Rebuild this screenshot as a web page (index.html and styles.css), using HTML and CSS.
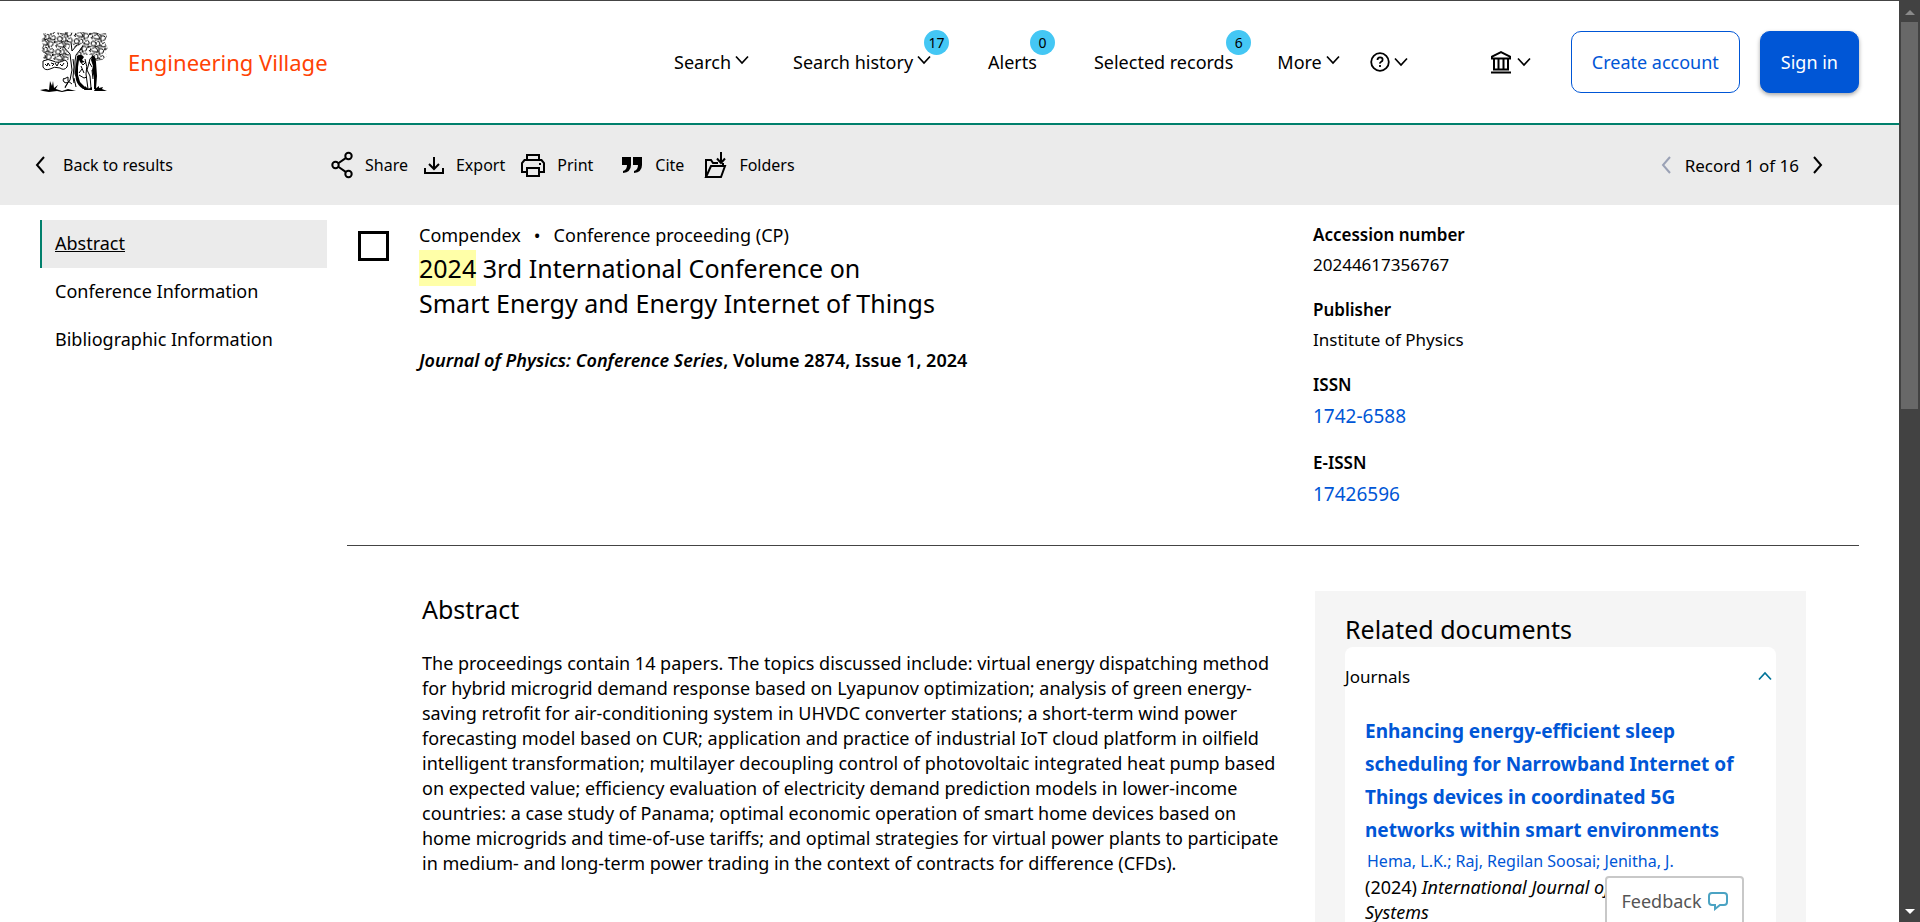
FILE: index.html
```html
<!DOCTYPE html>
<html lang="en">
<head>
    <meta charset="UTF-8">
    <meta name="viewport" content="width=device-width, initial-scale=1.0">
    <title>Engineering Village - Abstract</title>
    <link rel="stylesheet" href="styles.css">
</head>
<body>
    <!-- Shared icons -->
    <svg class="sprite" aria-hidden="true">
        <symbol id="chevron-down" viewBox="0 0 14 10">
            <path d="M1 1.5l6 6.5 6-6.5" fill="none" stroke="currentColor" stroke-width="1.7"/>
        </symbol>
        <symbol id="chevron-left" viewBox="0 0 10 18">
            <path d="M9 1L2 9l7 8" fill="none" stroke="currentColor" stroke-width="2"/>
        </symbol>
        <symbol id="chevron-right" viewBox="0 0 10 18">
            <path d="M1 1l7 8-7 8" fill="none" stroke="currentColor" stroke-width="2"/>
        </symbol>
    </svg>

    <div class="page">
        <header class="header">
            <a href="#" class="brand">
                <svg class="brand-logo" viewBox="0 0 68 60" aria-hidden="true">
                    <defs>
                        <pattern id="leaves" width="17" height="13" patternUnits="userSpaceOnUse" patternTransform="rotate(8)">
                            <g fill="none" stroke="#000" stroke-width="1">
                                <path d="M1 4q1-4 4-2t0 4-4-2M7 1q3 0 3 3t-3 2M12 3q3-3 4 0t-2 3-3-2M3 9q3-3 5 0t-2 3-3-1M10 8l3 0q3 1 1 4t-4 0zM0 11l2 2M15 8l2-1M8 7l2 1M5 0l1 1M10 0l2 1M0 8l2-1M8 12v1"/>
                            </g>
                            <path d="M5 6l3 0-2 2zM10 4l2 1-1 2zM15 6l2 3-2 0zM8 10l2 1-1 2zM1 9l2 1-2 2zM10 1l1-1 1 2zM5 3l2-1-1 2z"/>
                        </pattern>
                    </defs>
                    <path fill="url(#leaves)" d="M3 1l6 1 5-2 7 1 6-1 7 1 8-1 7 1 6-1 5 2 6-1 1 6-2 4 3 5-3 4 2 4-5 4-5 1-5-3-6 1-6-2-5 4-8-1-6 2-7-2-6 1-5-3 2-4-4-4 2-5-2-5 3-3z"/>
                    <path fill="#fff" stroke="#000" stroke-width="1" d="M3 29q5-3 10 0t12-1q4 2 2 7-3 4-7 1-6-2-10 1-5 2-7-2z"/>
                    <path d="M5 32l2 2 1-3 2 3M11 31l3 1-2 2M15 31l2 3 2-4M20 32l2 2 2-3" fill="none" stroke="#000" stroke-width="1"/>
                    <path fill="#fff" d="M29 22l-6-8 6 3 2-8 4 7 9-6-7 13h17l3 14-2 17-21 2-7-3z"/>
                    <g fill="none" stroke="#000">
                        <path d="M23 14l7 8M31 10l1 9 5-6M43 14l-7 9M30 22l1 8 1 8-2 10-5 7M36 23l-1 6v13l4 8 7 7M33 27l1 8-1 10 1 6M28 50l-3 6M34 46l2 9"/>
                        <path d="M24 46q-2 2 0 4t4 0M24 47l4-2 0 4 4 3"/>
                        <path d="M45 27q3 8 1 15l2 15M40 29l3 4 3-3M39 43l5 3 3-1M53 24q-4 2-4 7l-2 7 3 6 1 12M41 34l3 7M49 30l3 5M52 38l1 9M42 37l-3 4"/>
                    </g>
                    <path d="M37 24q4-3 7 1l-2 3 3 2-4 1-2-3-1 7v8l2 7 5 5 4 2h-6q-5-3-7-9l-1-8z"/>
                    <path d="M52 23q4 1 4 7l1 14-1 13-2 0 0-11-2-8 1-4-2-6z"/>
                    <path d="M45 54l3 3 4-2v3h-8z"/>
                    <path d="M9 58l1-9 2 5 1-5 1 7 4-3-3 5zM0 58l6-1 3 1 7-1 6 2 6-2 8 2h-9l-5 1-5-1-8 1-6-1zM55 57l4-3v2l4-1-1 2 5 2H54z"/>
                </svg>
                <span class="brand-name">Engineering Village</span>
            </a>
            <nav class="main-nav">
                <a href="#" class="nav-link">Search<svg class="chevron"><use href="#chevron-down"/></svg></a>
                <a href="#" class="nav-link spaced">Search history<svg class="chevron"><use href="#chevron-down"/></svg><span class="badge">17</span></a>
                <a href="#" class="nav-link spaced">Alerts<span class="badge">0</span></a>
                <a href="#" class="nav-link">Selected records<span class="badge">6</span></a>
                <a href="#" class="nav-link">More<svg class="chevron"><use href="#chevron-down"/></svg></a>
                <button class="icon-button help" aria-label="Help">
                    <svg width="20" height="20" viewBox="0 0 20 20" fill="none" stroke="currentColor" stroke-width="1.8">
                        <circle cx="10" cy="10" r="8.8"/>
                        <path d="M7.5 8q0-2.6 2.6-2.6T12.6 7.7q0 1.3-1.4 2t-1.2 2"/>
                        <path d="M10 13v2"/>
                    </svg>
                    <svg class="chevron"><use href="#chevron-down"/></svg>
                </button>
                <button class="icon-button institution" aria-label="Institution">
                    <svg width="22" height="24" viewBox="0 0 22 24" fill="none" stroke="currentColor" stroke-width="2">
                        <path d="M2 8.500V6.500l9-4.500 9 4.500v2zM3 19.500h16M1 22.500h20M4 9v10M8.500 9v10M13.500 9v10M18 9v10"/>
                    </svg>
                    <svg class="chevron"><use href="#chevron-down"/></svg>
                </button>
            </nav>
            <div class="account">
                <button class="btn btn-outline">Create account</button>
                <button class="btn btn-primary">Sign in</button>
            </div>
        </header>

        <div class="toolbar">
            <a href="#" class="back-link">
                <svg width="10" height="18"><use href="#chevron-left"/></svg>
                Back to results
            </a>
            <div class="tools">
                <button class="tool">
                    <svg width="22" height="28" viewBox="0 0 22 28" fill="none" stroke="currentColor" stroke-width="2">
                        <circle cx="4.500" cy="14" r="3.200"/><circle cx="17.500" cy="5" r="3.200"/><circle cx="17.500" cy="23" r="3.200"/>
                        <path d="M7.300 12.300l7.400-5.200M7.300 15.700l7.400 5.200"/>
                    </svg>
                    Share
                </button>
                <button class="tool">
                    <svg width="20" height="24" viewBox="0 0 20 24" fill="none" stroke="currentColor" stroke-width="2">
                        <path d="M1 15v5h18v-5M10 4v11M5 11l5 5 5-5"/>
                    </svg>
                    Export
                </button>
                <button class="tool">
                    <svg width="24" height="24" viewBox="0 0 24 24" fill="none" stroke="currentColor" stroke-width="2">
                        <path d="M6 7V2h12v5M5 19H1v-9l2.500-3h17L23 10v9h-4M6 15h12v8H6zM18 11h2"/>
                    </svg>
                    Print
                </button>
                <button class="tool tool-cite">
                    <svg width="22" height="24" viewBox="0 0 22 24" fill="currentColor">
                        <path d="M1 4h9v8q0 7-8 8v-2q4-1 4-6H1zM12 4h9v8q0 7-8 8v-2q4-1 4-6h-5z"/>
                    </svg>
                    Cite
                </button>
                <button class="tool">
                    <svg width="23" height="28" viewBox="0 0 23 28" fill="none" stroke="currentColor" stroke-width="2">
                        <path d="M3 26H2V9h5l2 3h5M19 15v-3M2 26l5-11h14l-4 11zM17 1v11M13 7.500l4 4.500 4-4.500"/>
                    </svg>
                    Folders
                </button>
            </div>
            <div class="pager">
                <button class="pager-button" aria-label="Previous record" disabled><svg width="10" height="18"><use href="#chevron-left"/></svg></button>
                <span>Record 1 of 16</span>
                <button class="pager-button" aria-label="Next record"><svg width="10" height="18"><use href="#chevron-right"/></svg></button>
            </div>
        </div>

        <div class="content">
            <nav class="side-nav">
                <a href="#" class="side-link active">Abstract</a>
                <a href="#" class="side-link">Conference Information</a>
                <a href="#" class="side-link">Bibliographic Information</a>
            </nav>

            <main class="record">
                <section class="record-head">
                    <input type="checkbox" class="record-check" aria-label="Select record">
                    <div class="record-info">
                        <p class="source"><span>Compendex</span><span>•</span><span>Conference proceeding (CP)</span></p>
                        <h1><mark>2024</mark> 3rd International Conference on<br>Smart Energy and Energy Internet of Things</h1>
                        <p class="journal"><em>Journal of Physics: Conference Series</em>, Volume 2874, Issue 1, 2024</p>
                    </div>
                    <dl class="details">
                        <dt>Accession number</dt>
                        <dd>20244617356767</dd>
                        <dt>Publisher</dt>
                        <dd>Institute of Physics</dd>
                        <dt>ISSN</dt>
                        <dd><a href="#">1742-6588</a></dd>
                        <dt>E-ISSN</dt>
                        <dd><a href="#">17426596</a></dd>
                    </dl>
                </section>

                <section class="record-body">
                    <article class="abstract">
                        <h2>Abstract</h2>
                        <p>The proceedings contain 14 papers. The topics discussed include: virtual energy dispatching method for hybrid microgrid demand response based on Lyapunov optimization; analysis of green energy-saving retrofit for air-conditioning system in UHVDC converter stations; a short-term wind power forecasting model based on CUR; application and practice of industrial IoT cloud platform in oilfield intelligent transformation; multilayer decoupling control of photovoltaic integrated heat pump based on expected value; efficiency evaluation of electricity demand prediction models in lower-income countries: a case study of Panama; optimal economic operation of smart home devices based on home microgrids and time-of-use tariffs; and optimal strategies for virtual power plants to participate in medium- and long-term power trading in the context of contracts for difference (CFDs).</p>
                    </article>

                    <aside class="related">
                        <h2>Related documents</h2>
                        <div class="related-card">
                            <button class="related-toggle">Journals<svg class="chevron"><use href="#chevron-down"/></svg></button>
                            <div class="related-item">
                                <a href="#" class="related-title">Enhancing energy-efficient sleep scheduling for Narrowband Internet of Things devices in coordinated 5G networks within smart environments</a>
                                <p class="authors"><a href="#">Hema, L.K.;</a> <a href="#">Raj, Regilan Soosai;</a> <a href="#">Jenitha, J.</a></p>
                                <p class="published">(2024) <em>International Journal of Communication Systems</em></p>
                            </div>
                        </div>
                    </aside>
                </section>
            </main>
        </div>
    </div>

    <div class="scrollbar" aria-hidden="true">
        <span class="arrow arrow-up"></span>
        <span class="thumb"></span>
        <span class="arrow arrow-down"></span>
    </div>

    <button class="feedback">
        Feedback
        <svg width="20" height="20" viewBox="0 0 20 20" fill="none" stroke="#4ba3c3" stroke-width="2">
            <path d="M4 2h12q3 0 3 3v6q0 3-3 3h-4l-5 4v-4H4q-3 0-3-3V5q0-3 3-3z"/>
        </svg>
    </button>
</body>
</html>
```
FILE: styles.css
```css
* {
    margin: 0;
    padding: 0;
    box-sizing: border-box;
}

body {
    display: flex;
    height: 100vh;
    overflow: hidden;
    background: #fff;
    color: #000;
    font-family: 'Noto Sans', 'Open Sans', sans-serif;
    font-size: 18px;
}

a {
    color: inherit;
    text-decoration: none;
}

button {
    background: none;
    border: none;
    color: inherit;
    font: inherit;
    cursor: pointer;
}

svg {
    flex-shrink: 0;
}

.sprite {
    position: absolute;
    width: 0;
    height: 0;
}

.page {
    flex: 1;
    min-width: 0;
    height: 100vh;
    overflow: hidden;
    border-top: 1px solid #444;
}

.chevron {
    width: 14px;
    height: 10px;
}

/* Header */
.header {
    display: flex;
    align-items: center;
    height: 124px;
    padding: 0 40px;
    border-bottom: 2px solid #00806c;
}

.brand {
    display: flex;
    align-items: center;
    gap: 20px;
    color: #ff4203;
    font-size: 22px;
}

.brand-logo {
    width: 68px;
    height: 60px;
}

.main-nav {
    display: flex;
    align-items: center;
    gap: 44px;
    margin-left: auto;
}

.nav-link {
    position: relative;
    white-space: nowrap;
}

.nav-link.spaced {
    margin-right: 13px;
}

.nav-link .chevron {
    margin: 0 0 4px 4px;
}

.badge {
    position: absolute;
    top: -20px;
    right: -18px;
    width: 25px;
    height: 25px;
    border-radius: 50%;
    background: #44c7f4;
    font-size: 14px;
    line-height: 25px;
    text-align: center;
}

.icon-button {
    display: flex;
    align-items: center;
    gap: 4px;
}

.help {
    margin: 0 38px 0 -14px;
}

.institution {
    gap: 5px;
}

.account {
    display: flex;
    gap: 20px;
    margin-left: 40px;
}

.btn {
    height: 62px;
    padding: 0 20px;
    border: 1px solid #0056d6;
    border-radius: 10px;
}

.btn-outline {
    color: #0056d6;
}

.btn-primary {
    background: #0056d6;
    color: #fff;
    box-shadow: 0 2px 4px rgba(0, 0, 0, 0.35);
}

/* Record toolbar */
.toolbar {
    display: flex;
    align-items: center;
    height: 80px;
    padding: 0 76px 0 35px;
    background: #ebebeb;
    font-size: 16px;
}

.back-link {
    display: flex;
    align-items: center;
    gap: 18px;
    width: 296px;
}

.tools {
    display: flex;
    gap: 16px;
}

.tool {
    display: flex;
    align-items: center;
    gap: 12px;
}

.tool-cite {
    margin: 0 4px 0 12px;
}

.pager {
    display: flex;
    align-items: center;
    gap: 14px;
    margin-left: auto;
    font-size: 17px;
}

.pager-button {
    display: flex;
}

.pager-button:disabled {
    color: #9aa1b5;
}

/* Content */
.content {
    display: flex;
    gap: 20px;
    padding: 15px 40px 0;
}

.side-nav {
    flex: 0 0 287px;
}

.side-link {
    display: block;
    height: 48px;
    padding-left: 13px;
    border-left: 2px solid transparent;
    line-height: 46px;
}

.side-link.active {
    border-color: #00806c;
    background: #ebebeb;
    text-decoration: underline;
}

.record {
    flex: 1;
    min-width: 0;
}

.record-head {
    display: flex;
    padding: 0 0 34px 11px;
    border-bottom: 1px solid #444;
}

.record-check {
    appearance: none;
    width: 31px;
    height: 30px;
    margin: 11px 30px 0 0;
    border: 3px solid #000;
    background: #fff;
}

.record-info {
    flex: 1;
}

.source {
    display: flex;
    gap: 13px;
    line-height: 30px;
}

h1 {
    padding-top: 1px;
    font-size: 25px;
    font-weight: 400;
    line-height: 35px;
}

mark {
    padding: 1px 0;
    background: #ffffa8;
}

.journal {
    margin-top: 24px;
    font-weight: 600;
    line-height: 30px;
}

.details {
    width: 546px;
    font-size: 17px;
    line-height: 30px;
}

.details dt {
    font-weight: 600;
}

.details dd {
    margin-bottom: 15px;
}

.details dd:last-child {
    margin-bottom: 0;
}

.details a {
    display: block;
    color: #0056d6;
    font-size: 19px;
    line-height: 33px;
}

.record-body {
    display: flex;
    justify-content: space-between;
    padding: 45px 53px 0 75px;
}

h2 {
    font-size: 25px;
    font-weight: 400;
    line-height: 36px;
}

.abstract {
    flex: 0 1 864px;
}

.abstract p {
    margin-top: 24px;
    line-height: 25px;
}

.related {
    width: 491px;
    padding: 20px 30px;
    background: #f5f5f5;
}

.related-card {
    border-radius: 8px;
    background: #fff;
}

.related-toggle {
    display: flex;
    align-items: center;
    justify-content: space-between;
    width: 100%;
    height: 58px;
    padding-right: 4px;
    font-size: 17px;
}

.related-toggle .chevron {
    color: #007398;
    transform: rotate(180deg);
}

.related-item {
    padding: 10px 20px;
}

.related-title {
    display: block;
    color: #0056d6;
    font-size: 19px;
    font-weight: 700;
    line-height: 33px;
}

.authors {
    padding-left: 2px;
    color: #0056d6;
    font-size: 16px;
    line-height: 28px;
}

.published {
    line-height: 25px;
}

/* Window scrollbar */
.scrollbar {
    display: flex;
    flex-direction: column;
    align-items: center;
    width: 21px;
    background: #424242;
}

.arrow {
    width: 0;
    height: 0;
    border: 5px solid transparent;
}

.arrow-up {
    margin: 5px 0 7px;
    border-bottom-color: #8a8a8a;
}

.arrow-down {
    margin: auto 0 3px;
    border-top-color: #fff;
}

.thumb {
    width: 17px;
    height: 42%;
    background: #686868;
}

.feedback {
    position: fixed;
    right: 176px;
    bottom: -4px;
    display: flex;
    align-items: center;
    justify-content: center;
    gap: 6px;
    width: 139px;
    height: 50px;
    border: 2px solid #c8c8c8;
    border-radius: 4px;
    background: #fff;
    color: #555;
}
```
